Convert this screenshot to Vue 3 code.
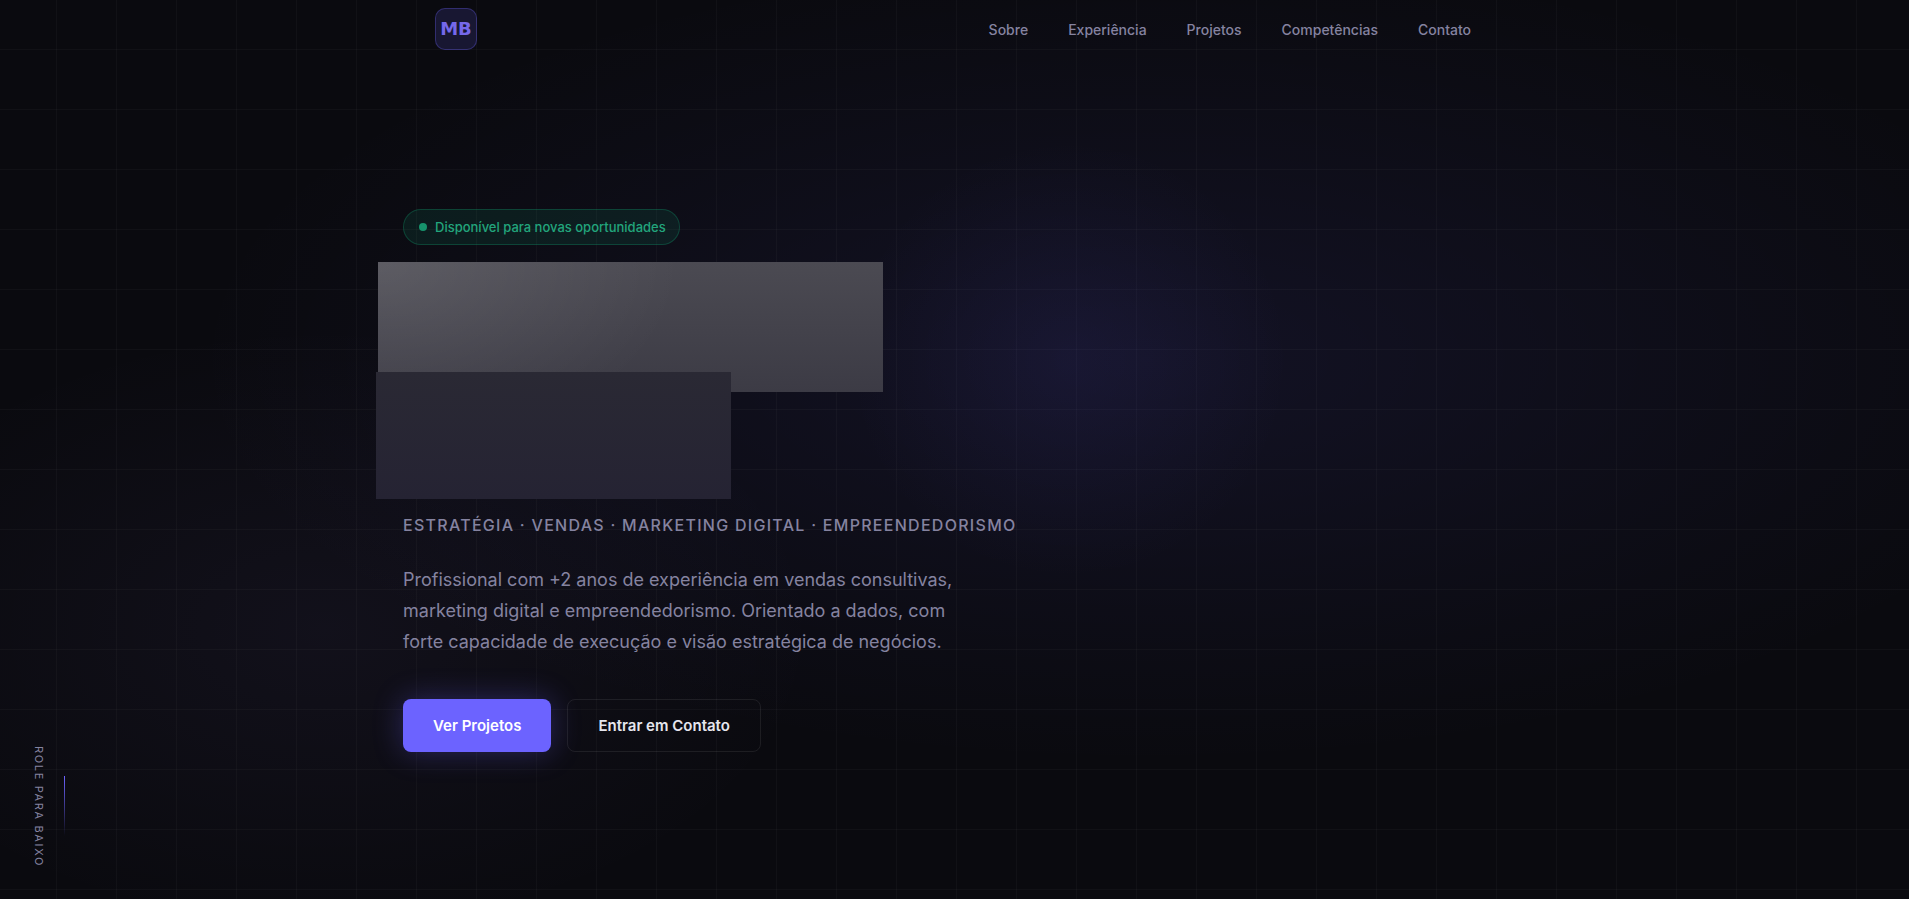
<script setup>
const links = [
  { href: '#sobre', label: 'Sobre' },
  { href: '#experiencia', label: 'Experiência' },
  { href: '#projetos', label: 'Projetos' },
  { href: '#competencias', label: 'Competências' },
  { href: '#contato', label: 'Contato' },
]
</script>

<template>
  <div class="page">
    <header class="header">
      <a class="logo" href="#inicio">MB</a>
      <nav class="nav" aria-label="Principal">
        <a v-for="link in links" :key="link.href" :href="link.href">{{ link.label }}</a>
      </nav>
    </header>

    <main id="inicio" class="hero">
      <p class="badge"><span class="dot"></span>Disponível para novas oportunidades</p>
      <div class="title" aria-hidden="true">
        <div class="block block-first"></div>
        <div class="block block-second"></div>
      </div>
      <p class="subtitle">Estratégia · Vendas · Marketing Digital · Empreendedorismo</p>
      <p class="lead">
        Profissional com +2 anos de experiência em vendas consultivas,
        marketing digital e empreendedorismo. Orientado a dados, com
        forte capacidade de execução e visão estratégica de negócios.
      </p>
      <div class="actions">
        <a class="button primary" href="#projetos">Ver Projetos</a>
        <a class="button outline" href="#contato">Entrar em Contato</a>
      </div>
    </main>

    <div class="scroll-hint">
      <span class="scroll-text">Role para baixo</span>
      <span class="scroll-line"></span>
    </div>
  </div>
</template>

<style>
body {
  background: #0a0a0f;
}
</style>

<style scoped>
.page {
  position: relative;
  box-sizing: border-box;
  min-height: 100vh;
  padding: 8px 3px 0 0;
  font-family: Inter, "Liberation Sans", sans-serif;
  color: #8583a0;
  background:
    linear-gradient(to right, rgba(255, 255, 255, 0.028) 1px, transparent 1px) 56px 0 / 60px 60px,
    linear-gradient(to bottom, rgba(255, 255, 255, 0.028) 1px, transparent 1px) 0 49px / 60px 60px,
    radial-gradient(circle 220px at 56% 40%, rgba(108, 99, 255, 0.07), transparent),
    radial-gradient(ellipse 50% 45% at 60% 40%, rgba(108, 99, 255, 0.09), transparent),
    radial-gradient(ellipse 26% 34% at 17% 70%, rgba(167, 139, 250, 0.05), transparent),
    #0a0a0f;
}

.header {
  display: flex;
  align-items: center;
  justify-content: space-between;
  box-sizing: border-box;
  max-width: 1100px;
  margin: 0 auto;
  padding: 0 32px;
}

.logo {
  display: flex;
  align-items: center;
  justify-content: center;
  box-sizing: border-box;
  width: 42px;
  height: 42px;
  border: 1px solid rgba(108, 99, 255, 0.3);
  border-radius: 10px;
  background: rgba(108, 99, 255, 0.15);
  color: #7568ea;
  font-family: "DejaVu Sans", sans-serif;
  font-size: 18px;
  font-weight: 700;
  line-height: 40px;
  text-decoration: none;
}

.nav {
  display: flex;
  gap: 40px;
  padding-top: 2px;
}

.nav a {
  color: #8583a0;
  font-size: 14px;
  font-weight: 500;
  line-height: 24px;
  text-decoration: none;
}

.hero {
  box-sizing: border-box;
  max-width: 1100px;
  margin: 0 auto;
  padding-top: 159px;
}

.badge {
  display: flex;
  align-items: center;
  gap: 8px;
  box-sizing: border-box;
  width: fit-content;
  height: 36px;
  margin: 0;
  padding: 0 13px 0 15px;
  border: 1px solid rgba(16, 185, 129, 0.25);
  border-radius: 18px;
  background: rgba(16, 185, 129, 0.1);
  color: #22a57c;
  font-size: 13px;
  font-weight: 500;
}

.dot {
  width: 8px;
  height: 8px;
  border-radius: 50%;
  background: #17936c;
}

.title {
  margin: 17px 0 0 -27px;
}

.block {
  max-width: 100%;
}

.block-first {
  width: 505px;
  height: 130px;
  margin-left: 2px;
  background:
    radial-gradient(ellipse 60% 150% at 0 0, rgba(255, 255, 255, 0.1), transparent),
    linear-gradient(to bottom, #4b4a52, #3c3b45);
}

.block-second {
  position: relative;
  width: 355px;
  height: 127px;
  margin-top: -20px;
  background: linear-gradient(to bottom, #2a2934, #252333);
}

.subtitle {
  margin: 14px 0 0;
  font-size: 16px;
  font-weight: 500;
  line-height: 24px;
  letter-spacing: 0.08em;
  text-transform: uppercase;
}

.lead {
  max-width: 560px;
  margin: 27px 0 0;
  font-size: 18px;
  line-height: 31px;
}

.actions {
  display: flex;
  flex-wrap: wrap;
  gap: 16px;
  margin-top: 42px;
}

.button {
  box-sizing: border-box;
  padding: 14px 30px;
  border-radius: 8px;
  font-size: 15px;
  font-weight: 600;
  line-height: 25px;
  text-decoration: none;
}

.primary {
  background: #6c63ff;
  color: #ffffff;
  box-shadow: 0 0 30px rgba(108, 99, 255, 0.3);
}

.outline {
  padding: 13px 30px;
  border: 1px solid rgba(255, 255, 255, 0.08);
  color: #e6e6ee;
}

.scroll-hint {
  position: absolute;
  bottom: 32px;
  left: 32px;
  display: flex;
  align-items: center;
  gap: 18px;
}

.scroll-text {
  font-size: 11px;
  line-height: 14px;
  letter-spacing: 0.15em;
  text-transform: uppercase;
  writing-mode: vertical-rl;
}

.scroll-line {
  width: 1px;
  height: 60px;
  background: linear-gradient(to bottom, #6c63ff, transparent);
}
</style>
